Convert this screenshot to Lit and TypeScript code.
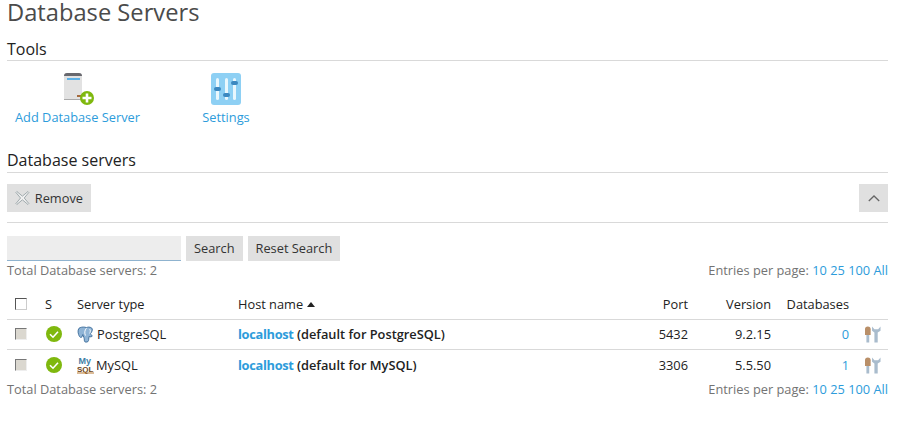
import { LitElement, html, css, svg } from "lit";
import { customElement } from "lit/decorators.js";

const check = svg`<svg width="16" height="16" viewBox="0 0 16 16"><circle cx="8" cy="8" r="8" fill="#7fb80e"/><path d="M4 8.200l3 3 5-5.500" fill="none" stroke="#fff" stroke-width="1.600"/></svg>`;
const tools = svg`<svg width="16" height="17" viewBox="0 0 17 17"><path d="M0 3q0-3 3-3t3 3v6H0z" fill="#b98f68"/><rect x="1.500" y="9" width="3" height="8" fill="#a9bccd"/><path d="M7.500 0v4.500l2.500 2V17h3.500V6.500L16.500 4.500V0l-2.500 3h-4z" fill="#a9bccd"/></svg>`;
const pg = svg`<svg width="18" height="17" viewBox="0 0 17 16"><path d="M3 1.500C1 2 .5 5 1.500 8s2 3 3 2.500L5.500 8C6 10 7 11 7 14c0 1.500 2.500 1.500 3.500.5 .8-1 .5-3 .8-4.500 1.700.5 3.500 0 3-1-1-.5-1.500-1-1.500-2C14.500 5 15 3 14 2c-2-1.500-4-1-5-.5C7 .8 5 .8 3 1.500z" fill="#8fb4d6" stroke="#41709c" stroke-width=".9"/><path d="M9 2c-2 2-2 5-1 7M12 3c1 1 .5 3 0 4" fill="none" stroke="#fff" stroke-width=".9"/></svg>`;
const mysql = svg`<svg width="17" height="18" viewBox="0 0 17 18"><text x="1.500" y="7.500" font-family="Liberation Sans" font-weight="700" font-size="9" fill="#3f7ea6">My</text><text x="0" y="15.500" font-family="Liberation Sans" font-weight="700" font-size="8" fill="#6e4520">SQL</text><rect y="16.500" width="17" height="1" fill="#b77a33"/></svg>`;

@customElement("app-root")
export class AppRoot extends LitElement {
  static styles = css`
    :host { display: block; width: 901px; height: 423px; overflow: hidden; background: #fff; box-sizing: border-box; padding: 0 13px 0 7px; font: 12.8px/18px "Open Sans", sans-serif; color: #222; }
    a { color: #2d9cdb; text-decoration: none; }
    h1 { margin: 0; font-size: 23.700px; line-height: 24px; font-weight: 400; color: #4b4b4b; height: 39px; }
    h2 { margin: 0; font-size: 16px; line-height: 20px; font-weight: 400; color: #222; border-bottom: 1px solid #d9d9d9; padding-bottom: 1px; }
    h2.sec { padding-bottom: 2px; }
    .tools { display: flex; margin-top: 12px; height: 77px; }
    .tool { display: flex; flex-direction: column; align-items: center; width: 141px; margin-right: 8px; }
    .tool svg { display: block; margin-bottom: 3px; }
    .tool.s { width: 72px; margin-left: 34px; }
    .bar { display: flex; justify-content: space-between; margin-top: 11px; padding-bottom: 10px; border-bottom: 1px solid #d9d9d9; }
    .btn { background: #e0e0e0; height: 28px; display: flex; align-items: center; color: #333; }
    .rm { padding: 0 8px; gap: 5px; width: 84px; box-sizing: border-box; }
    .up { width: 29px; justify-content: center; }
    .search { display: flex; gap: 5px; margin-top: 13px; height: 25px; }
    .input { width: 174px; height: 24px; background: #ededed; border-bottom: 1px solid #8fb3cf; }
    .sb { height: 25px; box-sizing: border-box; padding: 0 8px 2px; }
    .count { display: flex; justify-content: space-between; color: #737373; height: 18px; }
    .row { display: grid; grid-template-columns: 38px 32px 161px 1fr 60px 83px 78px 39px; align-items: center; box-sizing: border-box; }
    .head { height: 31px; margin-top: 10px; border-bottom: 1px solid #d9d9d9; padding: 1px 0; }
    .r { height: 30px; border-bottom: 1px solid #d9d9d9; padding-bottom: 1px; }
    .r.two { height: 30px; border: 0; padding: 0; }
    .cb { width: 12px; height: 12px; box-sizing: border-box; border: 1px solid #ccc; border-top-color: #555; border-left-color: #555; margin-left: 8px; background: #fff; }
    .r .cb { background: #dbd8d0; border-top-color: #777; border-left-color: #777; border-right-color: #eee; border-bottom-color: #eee; }
    .num { text-align: right; }
    .type { display: flex; align-items: center; gap: 2px; }
    .st { display: flex; padding-left: 1px; }
    .host b { font-weight: 600; color: #222; }
    .host a { font-weight: 700; letter-spacing: -.3px; }
    .sort { display: inline-block; width: 0; height: 0; border: 4px solid transparent; border-top: 0; border-bottom: 5px solid #222; margin-left: 4px; vertical-align: 2px; }
    .tl { padding-left: 16px; display: flex; }
  `;

  private entries() {
    return html`<span>Entries per page: <a href="#">10</a> <a href="#">25</a> <a href="#">100</a> <a href="#">All</a></span>`;
  }

  render() {
    return html`
      <h1>Database Servers</h1>
      <h2>Tools</h2>
      <div class="tools">
        <a class="tool" href="#">
          <svg width="32" height="32" viewBox="0 0 32 32"><path d="M2 3q0-3 3-3h12q3 0 3 3v24H2z" fill="#e2e2e2"/><path d="M2 3q0-3 3-3h12q3 0 3 3H2z" fill="#68686e"/><rect x="5" y="5" width="13" height="2" fill="#5cb0e6"/><rect x="2" y="26" width="18" height="1" fill="#aaa"/><rect x="15" y="22" width="6" height="2" fill="#a56a3c"/><circle cx="25" cy="25" r="7" fill="#7fb80e"/><path d="M25 20.500v9M20.500 25h9" stroke="#fff" stroke-width="2.600"/></svg>
          Add Database Server
        </a>
        <a class="tool s" href="#">
          <svg width="32" height="32" viewBox="0 0 32 32"><rect x="1" width="30" height="32" rx="3" fill="#8ed0f4"/><rect x="6" y="5" width="3" height="22" rx="1.500" fill="#e9f7fd"/><rect x="15" y="5" width="3" height="22" rx="1.500" fill="#e9f7fd"/><rect x="23" y="5" width="3" height="22" rx="1.500" fill="#e9f7fd"/><rect x="4" y="14" width="7" height="4" rx="2" fill="#3c88c0"/><rect x="13" y="20" width="7" height="4" rx="2" fill="#3c88c0"/><rect x="21" y="8" width="7" height="4" rx="2" fill="#3c88c0"/></svg>
          Settings
        </a>
      </div>
      <h2 class="sec">Database servers</h2>
      <div class="bar">
        <div class="btn rm"><svg width="16" height="16" viewBox="0 0 16 16"><path d="M2 1l6 5 6-5 1 1-5 6 5 6-1 1-6-5-6 5-1-1 5-6-5-6z" fill="#f0f0f0" stroke="#9aa5a8"/></svg>Remove</div>
        <div class="btn up"><svg width="12" height="7" viewBox="0 0 12 7"><path d="M.8 6L6 1l5.200 5" fill="none" stroke="#666" stroke-width="1.300"/></svg></div>
      </div>
      <div class="search">
        <div class="input"></div>
        <div class="btn sb">Search</div>
        <div class="btn sb">Reset Search</div>
      </div>
      <div class="count"><span>Total Database servers: 2</span>${this.entries()}</div>
      <div class="row head">
        <div class="cb"></div><div>S</div><div>Server type</div>
        <div>Host name<i class="sort"></i></div>
        <div class="num">Port</div><div class="num">Version</div><div class="num">Databases</div><div></div>
      </div>
      <div class="row r">
        <div class="cb"></div><div class="st">${check}</div>
        <div class="type">${pg}PostgreSQL</div>
        <div class="host"><a href="#">localhost</a> <b>(default for PostgreSQL)</b></div>
        <div class="num">5432</div><div class="num">9.2.15</div><div class="num"><a href="#">0</a></div><div class="tl">${tools}</div>
      </div>
      <div class="row r two">
        <div class="cb"></div><div class="st">${check}</div>
        <div class="type">${mysql}MySQL</div>
        <div class="host"><a href="#">localhost</a> <b>(default for MySQL)</b></div>
        <div class="num">3306</div><div class="num">5.5.50</div><div class="num"><a href="#">1</a></div><div class="tl">${tools}</div>
      </div>
      <div class="count"><span>Total Database servers: 2</span>${this.entries()}</div>
    `;
  }
}
